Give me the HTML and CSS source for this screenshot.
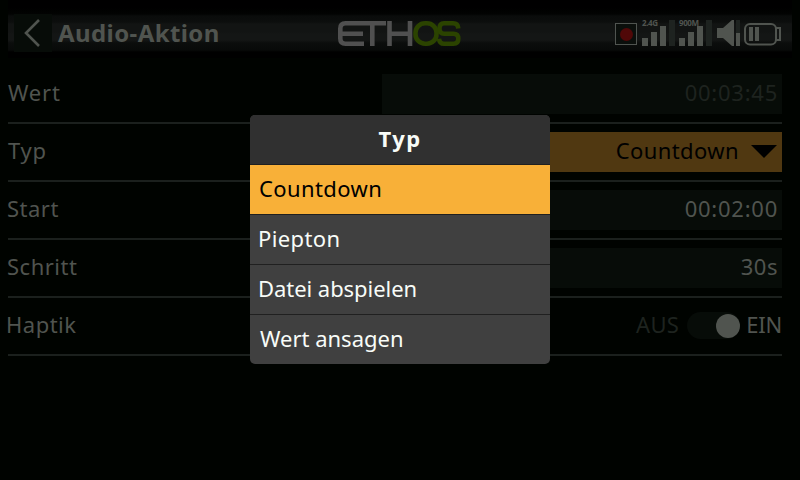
FILE: index.html
```
<!DOCTYPE html>
<html lang="de">
<head>
<meta charset="utf-8">
<title>Audio-Aktion</title>
<link rel="stylesheet" href="styles.css">
</head>
<body>
<header class="topbar">
  <div class="back"><svg width="38" height="38" viewBox="0 0 38 38"><path d="M25 6 L12 19 L25 32" fill="none" stroke="#50544f" stroke-width="2.6"/></svg></div>
  <h1 class="title">Audio-Aktion</h1>
  <svg class="logo" width="124" height="26" viewBox="0 0 124 26" fill="none" stroke-width="4.600">
    <g stroke="#505050"><path d="M48 2.300H7.500Q2.300 2.300 2.300 7.500V17.500Q2.300 22.700 7.500 22.700H26M2.500 12.700H25M34.300 2.500V25M51.500 0V25M72 0V25M51.500 12.700H72"/></g>
    <g stroke="#2b4300"><rect x="77.500" y="2.300" width="21" height="20.400" rx="9.500"/><path d="M120.300 7.500Q120 2.300 115 2.300H106Q101.500 2.300 101.500 7.500T106 12.700H115.500Q120.300 12.700 120.300 17.700T115.500 22.700H106Q101.500 22.700 101 17.700"/></g>
  </svg>
  <svg class="status" width="171" height="32" viewBox="0 0 171 32">
    <rect x="3.500" y="6.500" width="21" height="21" fill="#0b0f0c" stroke="#505450"/>
    <circle cx="14.500" cy="17.500" r="6.500" fill="#500808"/>
    <g fill="#50544f"><path d="M30 21h6v8h-6zM39 15h6v14h-6zM48 9h6v20h-6zM67 21h6v8h-6zM76 15h6v14h-6zM85 9h6v20h-6z"/>
    <path d="M105 11h6l9-8h2v26h-2l-9-8h-6zM124 16h4v13h-4z"/></g>
    <path fill="#1e2320" d="M57 3h6v26h-6zM94 3h6v26h-6zM124 3h4v13h-4z"/>
    <rect x="133" y="7" width="31" height="20.500" rx="5" fill="none" stroke="#50544f" stroke-width="2"/>
    <path d="M164 11h4v12h-4" fill="none" stroke="#50544f" stroke-width="2"/>
    <path d="M137 10h4v14h-4zM143 10h4v14h-4z" fill="#50544f"/>
    <text class="band" x="30" y="9" textLength="16">2.4G</text><text class="band" x="67" y="9" textLength="20">900M</text>
  </svg>
</header>
<main class="form">
  <div class="row"><span class="label">Wert</span><span class="field time muted">00:03:45</span></div>
  <div class="row"><span class="label">Typ</span><span class="field select">Countdown<svg class="arrow" width="26" height="14" viewBox="0 0 26 14"><path d="M0 0H26L13 13Z"/></svg></span></div>
  <div class="row"><span class="label tight">Start</span><span class="field time">00:02:00</span></div>
  <div class="row"><span class="label tight">Schritt</span><span class="field">30s</span></div>
  <div class="row"><span class="label haptic">Haptik</span><span class="toggle"><span class="off">AUS</span><span class="switch"><span class="knob"></span></span><span class="on">EIN</span></span></div>
</main>
<section class="dialog">
  <h2 class="dialog-title">Typ</h2>
  <div class="option selected">Countdown</div>
  <div class="option piep">Piepton</div>
  <div class="option file">Datei abspielen</div>
  <div class="option last">Wert ansagen</div>
</section>
</body>
</html>
```
FILE: styles.css
```
* { box-sizing: border-box; }
body {
  margin: 0;
  width: 800px;
  height: 480px;
  overflow: hidden;
  background: #000300;
  color: #50544f;
  font: 22px/40px "Noto Sans", sans-serif;
  letter-spacing: 0.5px;
  position: relative;
}
.topbar {
  height: 58px;
  margin: 0 8px;
  padding: 8px 0 0 6px;
  display: grid;
  grid-template-columns: 44px 279px 275px 171px;
  align-items: start;
  background: linear-gradient(#000 0 8px, #020302 14px, #0a0c0b 16px, #0c0e0d 22px, #121413 24px 32px, #141615 34px 40px, #0b0d0c 43px, #080a09 50px, #000 52px);
}
.back { width: 38px; height: 38px; margin-top: 6px; background: #070c08; }
.back svg { display: block; }
.title { margin: 5px 0 0; font-size: 24px; line-height: 40px; font-weight: 700; letter-spacing: 0.4px; white-space: nowrap; }
.logo { margin-top: 13px; margin-left: 1px; }
.status { margin-top: 9px; }
.band { font-size: 8px; font-weight: 700; letter-spacing: 0; fill: #50544f; }
.form { width: 774px; margin: 8px 0 0 8px; }
.row {
  display: grid;
  grid-template-columns: 374px 400px;
  height: 58px;
  padding: 8px 0;
  border-bottom: 2px solid #1b201d;
}
.label { line-height: 37px; letter-spacing: 0.8px; }
.tight { margin-left: -1px; letter-spacing: 0.5px; }
.haptic { margin-left: -2px; letter-spacing: 0.5px; }
.field { height: 40px; line-height: 37px; padding-right: 4px; text-align: right; background: #070c08; }
.time { letter-spacing: 0.75px; }
.muted { color: #1e231f; }
.select { padding: 0 5px 3px 0; letter-spacing: 0.4px; background: #503811; color: #000; display: flex; justify-content: flex-end; align-items: center; gap: 12px; }
.arrow { margin-top: 3px; }
.toggle { height: 39px; line-height: 37px; display: flex; align-items: center; justify-content: flex-end; }
.off { color: #1e231f; letter-spacing: 0.3px; margin: 0 8px 2px 0; }
.on { letter-spacing: -0.2px; margin-bottom: 2px; }
.switch { width: 53px; height: 27px; border-radius: 14px; background: #070c08; margin-right: 6px; padding: 2px 0; display: flex; justify-content: flex-end; }
.knob { width: 24px; height: 24px; border-radius: 50%; background: #50544f; }
.dialog {
  position: absolute;
  left: 250px;
  top: 115px;
  width: 300px;
  height: 249px;
  border-radius: 5px;
  overflow: hidden;
  background: #404040;
  color: #f8fcf8;
}
.dialog-title { margin: 0; height: 50px; line-height: 47px; font-size: 22px; letter-spacing: 1.5px; text-align: center; background: #303030; border-bottom: 1px solid #202020; }
.option { height: 50px; line-height: 47px; padding-left: 8px; border-bottom: 1px solid #202020; }
.option.selected { padding-left: 9px; letter-spacing: 0.4px; background: #f8b038; color: #000; }
.option.piep { letter-spacing: 0.4px; }
.option.file { letter-spacing: -0.05px; }
.option.last { padding-left: 10px; letter-spacing: 0; border-bottom: 0; }
```
